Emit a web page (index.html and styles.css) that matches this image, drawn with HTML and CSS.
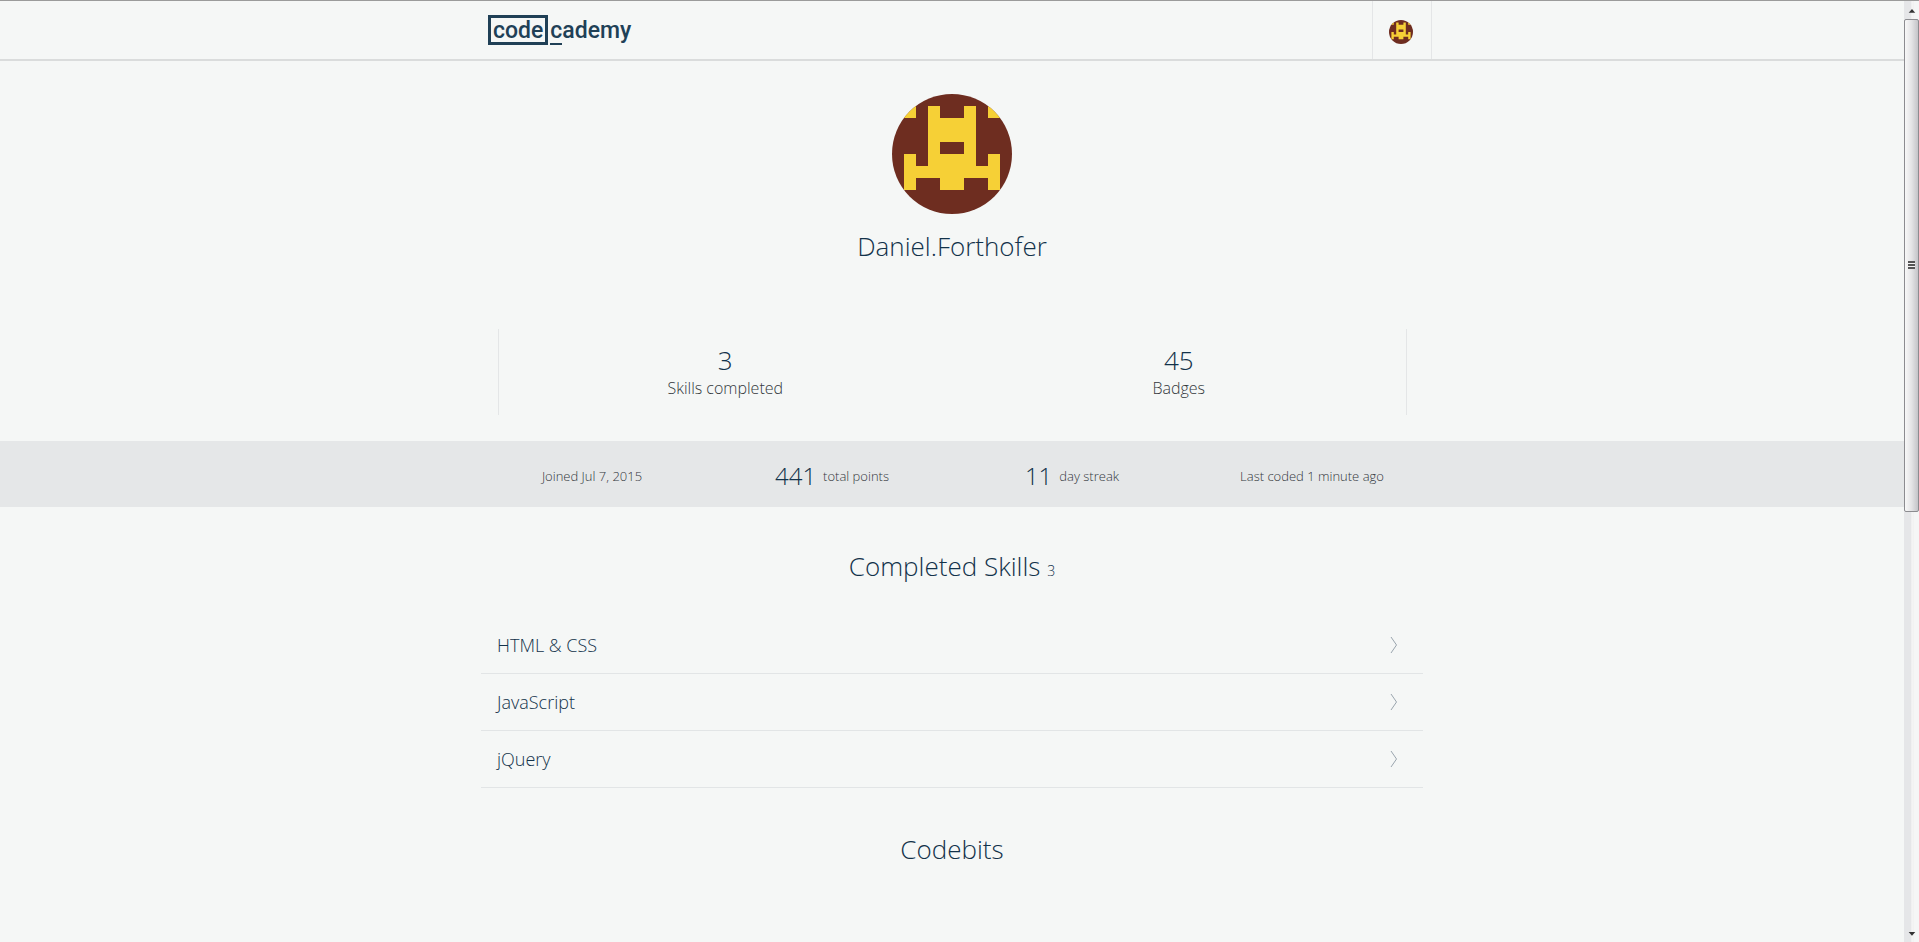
FILE: index.html
```html
<!DOCTYPE html>
<html lang="en">
<head>
<meta charset="utf-8">
<title>Daniel.Forthofer | Codecademy</title>
<link rel="stylesheet" href="styles.css">
</head>
<body>
<svg class="defs" aria-hidden="true">
  <defs>
    <clipPath id="round"><circle cx="5" cy="5" r="5"/></clipPath>
    <symbol id="avatar" viewBox="0 0 10 10">
      <g clip-path="url(#round)">
        <path fill="#6e2d20" d="M0 0h10v10H0z"/>
        <path fill="#f6d036" fill-rule="evenodd" d="M1 1h1v1H1zM8 1h1v1H8zM3 1h1v1h2V1h1v5h1V5h1v3H8V7H6v1H4V7H2v1H1V5h1v1h1zM4 4v1h2V4z"/>
      </g>
    </symbol>
    <symbol id="chevron" viewBox="0 0 8 18">
      <path fill="none" stroke="#9aa5ae" d="M1 1l5.500 8L1 17"/>
    </symbol>
  </defs>
</svg>
<div class="window">
  <div class="page">
    <header class="topbar">
      <div class="topbar-inner">
        <a class="logo" href="#"><span class="logo-box">code</span><span class="logo-rest"><span class="logo-c">c</span>ademy</span></a>
        <button class="account" type="button" aria-label="Account menu"><svg class="avatar-small"><use href="#avatar"/></svg></button>
      </div>
    </header>
    <main>
      <section class="profile">
        <svg class="avatar-large" role="img" aria-label="Avatar"><use href="#avatar"/></svg>
        <h1 class="title">Daniel.Forthofer</h1>
      </section>
      <section class="stats">
        <div class="stat"><span class="number">3</span><span class="label">Skills completed</span></div>
        <div class="stat"><span class="number">45</span><span class="label">Badges</span></div>
      </section>
      <section class="band">
        <div class="band-inner">
          <div class="fact">Joined Jul 7, 2015</div>
          <div class="fact"><span class="number">441</span>total points</div>
          <div class="fact"><span class="number">11</span>day streak</div>
          <div class="fact">Last coded 1 minute ago</div>
        </div>
      </section>
      <section class="skills">
        <h2 class="title">Completed Skills <small class="count">3</small></h2>
        <ul class="skill-list">
          <li><a class="skill" href="#">HTML &amp; CSS<svg class="chevron" aria-hidden="true"><use href="#chevron"/></svg></a></li>
          <li><a class="skill" href="#">JavaScript<svg class="chevron" aria-hidden="true"><use href="#chevron"/></svg></a></li>
          <li><a class="skill" href="#">jQuery<svg class="chevron" aria-hidden="true"><use href="#chevron"/></svg></a></li>
        </ul>
      </section>
      <section class="codebits">
        <h2 class="title">Codebits</h2>
      </section>
    </main>
  </div>
  <div class="scrollbar" aria-hidden="true">
    <svg class="arrow" viewBox="0 0 16 18"><path fill="#333" d="M5 12l3.500-4 3.500 4z"/></svg>
    <div class="track"><div class="thumb"><span class="grip"></span></div></div>
    <svg class="arrow" viewBox="0 0 16 18"><path fill="#333" d="M5 8h7l-3.500 4z"/></svg>
  </div>
</div>
</body>
</html>
```
FILE: styles.css
```css
* {
  box-sizing: border-box;
}

body {
  margin: 0;
  background: #f5f7f6;
  color: #33373c;
  font-family: "Open Sans", "Noto Sans", sans-serif;
  font-size: 13px;
  font-weight: 300;
}

a {
  color: inherit;
  text-decoration: none;
}

.defs {
  position: absolute;
  width: 0;
  height: 0;
}

.window {
  display: flex;
  height: 100vh;
  border-top: 1px solid #9b9b9b;
}

.page {
  flex: 1;
  overflow: hidden;
}

.topbar {
  border-bottom: 2px solid #dadcdc;
}

.topbar-inner {
  display: flex;
  align-items: center;
  justify-content: space-between;
  max-width: 960px;
  height: 58px;
  margin: 0 auto;
  padding-left: 16px;
}

.logo {
  display: flex;
  color: #204056;
  font-family: Roboto, sans-serif;
  font-size: 23px;
  font-weight: 500;
  line-height: 22px;
}

.logo-box {
  padding: 2px 2px 0;
  border: 3px solid #204056;
}

.logo-rest {
  display: flex;
  padding: 5px 0 0 2px;
}

.logo-c {
  height: 25px;
  border-bottom: 2px solid #204056;
}

.account {
  display: flex;
  align-items: center;
  justify-content: center;
  align-self: stretch;
  width: 60px;
  padding: 4px 2px 0 0;
  border: solid #e4e6e7;
  border-width: 0 1px;
  background: none;
}

.avatar-small {
  width: 24px;
  height: 24px;
}

.profile {
  display: flex;
  flex-direction: column;
  align-items: center;
  gap: 14px;
  padding-top: 33px;
}

.avatar-large {
  width: 120px;
  height: 120px;
}

.title {
  margin: 0;
  color: #12324a;
  font-size: 26px;
  font-weight: 300;
  line-height: 36px;
  text-align: center;
}

.stats {
  display: flex;
  max-width: 909px;
  height: 86px;
  margin: 65px auto 26px;
  padding-top: 4px;
  border: solid #e4e6e7;
  border-width: 0 1px;
}

.stat {
  display: flex;
  flex: 1;
  flex-direction: column;
  align-items: center;
  justify-content: center;
}

.number {
  color: #12324a;
  font-size: 26px;
  line-height: 28px;
}

.label {
  font-size: 16px;
  line-height: 28px;
}

.band {
  background: #e5e7e8;
}

.band-inner {
  display: grid;
  grid-template-columns: repeat(4, 1fr);
  align-items: center;
  max-width: 960px;
  height: 66px;
  margin: 0 auto;
  padding-top: 3px;
}

.fact {
  display: flex;
  align-items: center;
  justify-content: center;
  gap: 7px;
}

.fact .number {
  font-size: 24px;
}

.skills {
  max-width: 942px;
  margin: 0 auto;
  padding-top: 41px;
}

.count {
  font-size: 14px;
}

.skill-list {
  margin: 28px 0 0;
  padding: 0;
  list-style: none;
}

.skill {
  display: flex;
  align-items: center;
  justify-content: space-between;
  height: 57px;
  padding: 0 25px 0 16px;
  border-bottom: 1px solid #e2e5e6;
  color: #12324a;
  font-size: 18px;
}

.chevron {
  width: 8px;
  height: 18px;
}

.codebits {
  padding-top: 43px;
}

.scrollbar {
  display: flex;
  flex-direction: column;
  width: 15px;
  background: linear-gradient(to right, #e5e6e8 7px, #fafafa 8px, #eeeeee 9px, #f5f6f6 10px);
}

.arrow {
  width: 15px;
  height: 18px;
}

.track {
  flex: 1;
}

.thumb {
  display: flex;
  align-items: center;
  justify-content: center;
  height: calc(54% + 4px);
  border: 1px solid #8c8c90;
  border-radius: 2px;
  background: linear-gradient(to right, #f8f8f8, #e4e4e6 50%, #c4c4c8);
}

.grip {
  width: 7px;
  height: 8px;
  background: repeating-linear-gradient(#555 0 2px, #f4f4f4 2px 3px);
}
```
